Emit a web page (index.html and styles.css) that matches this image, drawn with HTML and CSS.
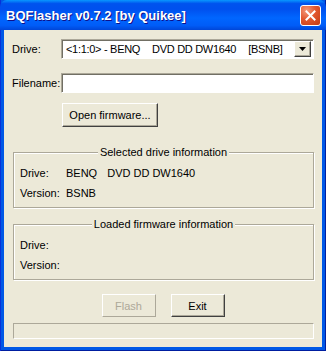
FILE: index.html
```html
<!DOCTYPE html>
<html lang="en">
<head>
    <meta charset="UTF-8">
    <meta name="viewport" content="width=device-width, initial-scale=1.0">
    <title>BQFlasher</title>
    <link rel="stylesheet" href="styles.css">
</head>
<body>
    <div class="window">
        <!-- title bar -->
        <div class="titlebar">
            <span class="title">BQFlasher v0.7.2 [by Quikee]</span>
            <button class="close-btn" aria-label="Close">
                <svg width="11" height="11" viewBox="0 0 11 11">
                    <path d="M1.5 1.5 L9.5 9.5 M9.5 1.5 L1.5 9.5" stroke="#fff" stroke-width="2" stroke-linecap="square"/>
                </svg>
            </button>
        </div>

        <div class="client">
            <div class="field-row drive-row">
                <label>Drive:</label>
                <div class="combo">
                    <span class="combo-text"><span>&lt;1:1:0&gt; - BENQ</span><span class="model">DVD DD DW1640</span><span class="rev">[BSNB]</span></span>
                    <span class="combo-arrow">
                        <svg width="7" height="4" viewBox="0 0 7 4"><path d="M0 0 H7 L3.5 4 Z" fill="#000"/></svg>
                    </span>
                </div>
            </div>

            <div class="field-row file-row">
                <label for="filename">Filename:</label>
                <input type="text" id="filename" class="edit">
            </div>

            <div class="open-row">
                <button class="btn open-btn">Open firmware...</button>
            </div>

            <div class="group selected-group">
                <div class="group-title">Selected drive information</div>
                <div class="info-row"><span>Drive:</span><span>BENQ<span class="gap"></span>DVD DD DW1640</span></div>
                <div class="info-row"><span>Version:</span><span>BSNB</span></div>
            </div>

            <div class="group loaded-group">
                <div class="group-title">Loaded firmware information</div>
                <div class="info-row"><span>Drive:</span><span></span></div>
                <div class="info-row"><span>Version:</span><span></span></div>
            </div>

            <div class="action-row">
                <button class="btn action-btn" disabled>Flash</button>
                <button class="btn action-btn">Exit</button>
            </div>

            <div class="progress"></div>
        </div>
    </div>
</body>
</html>
```

FILE: styles.css
```css
body {
    margin: 0;
    font-family: "Liberation Sans", Arial, sans-serif;
    font-size: 11px;
    color: #000;
    background: #fff;
}

.window {
    width: 326px;
    height: 351px;
    display: flex;
    flex-direction: column;
    background: #0058e6;
    box-shadow: inset 1px 0 #0831d9, inset -1px 0 #001ea0, inset 0 -1px #001ea0;
}

.titlebar {
    height: 30px;
    display: flex;
    align-items: center;
    justify-content: space-between;
    padding: 0 5px 0 6px;
    box-sizing: border-box;
    border-radius: 7px 7px 0 0;
    background: linear-gradient(#0997ff 0%, #0053ee 12%, #0050ee 30%, #0066ff 60%, #005cf7 85%, #0046d8 100%);
}

.title {
    color: #fff;
    font-size: 13px;
    font-weight: bold;
    text-shadow: 1px 1px #0f1089;
    margin-top: 1px;
}

.close-btn {
    width: 21px;
    height: 21px;
    padding: 0;
    display: flex;
    align-items: center;
    justify-content: center;
    border: 1px solid #fff;
    border-radius: 3px;
    background: radial-gradient(circle at 30% 25%, #f39a7c 0%, #e2582f 45%, #c43a12 100%);
    cursor: pointer;
}

.client {
    flex: 1;
    margin: 0 4px 4px 4px;
    padding: 9px 8px 0 8px;
    background: #ece9d8;
}

.field-row {
    display: grid;
    grid-template-columns: 49px 1fr;
    align-items: center;
}

.file-row {
    margin-top: 14px;
}

.combo {
    height: 20px;
    box-sizing: border-box;
    display: flex;
    align-items: center;
    justify-content: space-between;
    background: #fff;
    border: 1px solid;
    border-color: #aca899 #fff #fff #aca899;
    box-shadow: inset 1px 1px #716f64;
    padding: 0 2px 0 4px;
}

.combo-text {
    white-space: nowrap;
    letter-spacing: -0.3px;
}

.combo-text .model {
    margin-left: 12px;
}

.combo-text .rev {
    margin-left: 12px;
}

.combo-arrow {
    width: 17px;
    height: 16px;
    box-sizing: border-box;
    display: flex;
    align-items: center;
    justify-content: center;
    background: #ece9d8;
    border: 1px solid;
    border-color: #fff #404040 #404040 #fff;
    box-shadow: inset -1px -1px #aca899;
}

.edit {
    height: 20px;
    box-sizing: border-box;
    margin: 0;
    padding: 0 3px;
    font: inherit;
    background: #fff;
    border: 1px solid;
    border-color: #aca899 #fff #fff #aca899;
    box-shadow: inset 1px 1px #716f64;
}

.btn {
    box-sizing: border-box;
    margin: 0;
    padding: 0;
    font: inherit;
    color: #000;
    background: #ece9d8;
    border: 1px solid;
    border-color: #fff #404040 #404040 #fff;
    box-shadow: inset -1px -1px #aca899;
    cursor: pointer;
}

.btn:disabled {
    color: #aca899;
    border-color: #fff #aca899 #aca899 #fff;
    box-shadow: none;
    cursor: default;
}

.open-row {
    margin-top: 10px;
    padding-left: 50px;
}

.open-btn {
    width: 96px;
    height: 24px;
}

.group {
    margin: 25px 0 0 1px;
    padding: 0 6px 4px 6px;
    border: 1px solid #aca899;
    box-shadow: 1px 1px #fff, inset 1px 1px #fff;
}

.loaded-group {
    margin-top: 16px;
}

.group-title {
    display: table;
    margin: -7px auto 4px;
    padding: 0 2px;
    line-height: 13px;
    background: #ece9d8;
}

.info-row {
    display: grid;
    grid-template-columns: 46px 1fr;
    line-height: 20px;
    height: 20px;
}

.gap {
    display: inline-block;
    width: 10px;
}

.action-row {
    margin-top: 14px;
    display: flex;
    justify-content: center;
    gap: 15px;
}

.action-btn {
    width: 54px;
    height: 23px;
}

.progress {
    margin: 6px 0 0 1px;
    height: 16px;
    box-sizing: border-box;
    border: 1px solid;
    border-color: #aca899 #fff #fff #aca899;
}
```
